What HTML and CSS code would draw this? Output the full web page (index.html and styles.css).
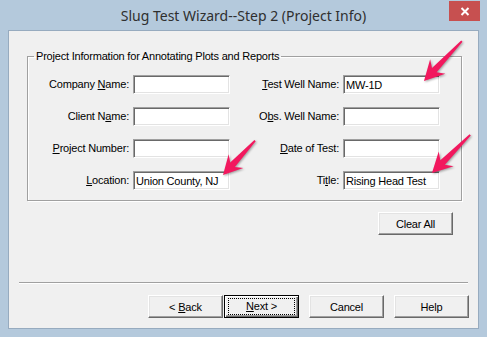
FILE: index.html
```html
<!DOCTYPE html>
<html>
<head>
  <title>Slug Test Wizard--Step 2 (Project Info)</title>
  <link rel="stylesheet" href="styles.css">
</head>
<body>
  <div class="window">
    <!-- Title bar -->
    <div class="titlebar">
      <div class="title">Slug Test Wizard--Step 2 (Project Info)</div>
      <div class="close">
        <svg width="10" height="9" viewBox="0 0 10 9">
          <path d="M1.5 1 L8.5 8 M8.5 1 L1.5 8" stroke="#fff" stroke-width="2"/>
        </svg>
      </div>
    </div>

    <!-- Dialog body -->
    <div class="client">
      <fieldset class="group">
        <legend>Project Information for Annotating Plots and Reports</legend>
        <div class="fields">
          <label>Company <u>N</u>ame:</label>
          <input class="field" type="text">
          <label><u>T</u>est Well Name:</label>
          <input class="field" type="text" value="MW-1D">

          <label>Client N<u>a</u>me:</label>
          <input class="field" type="text">
          <label>O<u>b</u>s. Well Name:</label>
          <input class="field" type="text">

          <label><u>P</u>roject Number:</label>
          <input class="field" type="text">
          <label><u>D</u>ate of Test:</label>
          <input class="field" type="text">

          <label><u>L</u>ocation:</label>
          <input class="field" type="text" value="Union County, NJ">
          <label>Ti<u>t</u>le:</label>
          <input class="field" type="text" value="Rising Head Test">
        </div>
      </fieldset>

      <div class="clear-row">
        <button class="btn">Clear All</button>
      </div>

      <div class="separator"></div>

      <div class="nav-row">
        <button class="btn">&lt; <u>B</u>ack</button>
        <button class="btn default"><span class="focus"><u>N</u>ext &gt;</span></button>
        <button class="btn cancel">Cancel</button>
        <button class="btn">Help</button>
      </div>
    </div>

    <!-- Annotation arrows -->
    <svg class="arrows" width="487" height="337" viewBox="0 0 487 337">
      <g transform="translate(424 81) rotate(133.5)">
        <polygon points="0,0 -20,-10.5 -15,-3.2 -55,-0.9 -55,0.9 -15,3.2 -20,10.5"/>
      </g>
      <g transform="translate(223 175) rotate(133)">
        <polygon points="0,0 -19,-10 -14,-3.2 -47,-0.9 -47,0.9 -14,3.2 -19,10"/>
      </g>
      <g transform="translate(432 173) rotate(135)">
        <polygon points="0,0 -20,-10.5 -15,-3.2 -54,-0.9 -54,0.9 -15,3.2 -20,10.5"/>
      </g>
    </svg>
  </div>
</body>
</html>
```

FILE: styles.css
```css
body {
  margin: 0;
  background-color: #b4c9dc;
  font-family: "Liberation Sans", Arial, sans-serif;
  font-size: 11px;
  letter-spacing: -0.2px;
  color: #000;
}

.window {
  position: relative;
  width: 487px;
  height: 337px;
  display: flex;
  flex-direction: column;
}

.titlebar {
  height: 30px;
  display: flex;
  align-items: flex-start;
  padding-left: 38px;
}

.title {
  flex: 1;
  text-align: center;
  font-family: "Noto Sans", sans-serif;
  font-size: 14px;
  letter-spacing: 0;
  color: #2f2f2f;
  line-height: 30px;
  padding-top: 1px;
}

.close {
  width: 31px;
  height: 20px;
  margin-top: 1px;
  margin-right: 7px;
  background-color: #c75050;
  display: flex;
  align-items: center;
  justify-content: center;
}

.client {
  margin: 0 8px;
  height: 299px;
  box-sizing: border-box;
  border: 1px solid #97abbf;
  background-color: #f0f0f0;
  display: flex;
  flex-direction: column;
}

.group {
  width: 435px;
  box-sizing: border-box;
  margin: 19px 0 0 18px;
  padding: 0 0 10px 0;
  border: 1px solid #a0a0a0;
  box-shadow: 1px 1px 0 #fff, inset 1px 1px 0 #fff;
}

.group legend {
  margin-left: 6px;
  padding: 0 2px;
  line-height: 13px;
}

.fields {
  margin-top: 12px;
  display: grid;
  grid-template-columns: 105px 97px 113px 97px;
  grid-auto-rows: 19px;
  row-gap: 13px;
}

.fields label {
  text-align: right;
  padding-right: 4px;
  line-height: 19px;
}

.field {
  width: 97px;
  height: 19px;
  box-sizing: border-box;
  margin: 0;
  padding: 0 2px;
  border: 1px solid;
  border-color: #a0a0a0 #fff #fff #a0a0a0;
  box-shadow: inset 1px 1px 0 #696969, inset -1px -1px 0 #e3e3e3;
  background-color: #fff;
  font-family: "Liberation Sans", Arial, sans-serif;
  font-size: 11px;
  letter-spacing: -0.2px;
  color: #000;
  outline: none;
}

.clear-row {
  display: flex;
  justify-content: flex-end;
  margin-top: 11px;
  padding-right: 25px;
}

.btn {
  width: 75px;
  height: 23px;
  box-sizing: border-box;
  padding: 0;
  border: 1px solid;
  border-color: #fff #696969 #696969 #fff;
  box-shadow: inset -1px -1px 0 #a0a0a0, inset 1px 1px 0 #e3e3e3;
  background-color: #f0f0f0;
  font-family: "Liberation Sans", Arial, sans-serif;
  font-size: 11px;
  letter-spacing: -0.2px;
  color: #000;
}

.btn.default {
  margin-left: 1px;
  border: 1px solid #000;
  box-shadow: inset 1px 1px 0 #fff, inset -1px -1px 0 #696969, inset -2px -2px 0 #a0a0a0;
}

.btn .focus {
  display: block;
  margin: 2px 3px;
  height: 15px;
  line-height: 15px;
  border: 1px dotted #000;
}

.btn.cancel {
  margin-left: 10px;
  margin-right: 10px;
}

.separator {
  margin: 47px 10px 0 10px;
  border-top: 1px solid #a0a0a0;
  border-bottom: 1px solid #fff;
}

.nav-row {
  display: flex;
  justify-content: flex-end;
  margin-top: 11px;
  padding-right: 9px;
}

.arrows {
  position: absolute;
  top: 0;
  left: 0;
  pointer-events: none;
  fill: #f2185e;
  filter: drop-shadow(1px 1px 1px rgba(0, 0, 0, 0.35));
}
```
